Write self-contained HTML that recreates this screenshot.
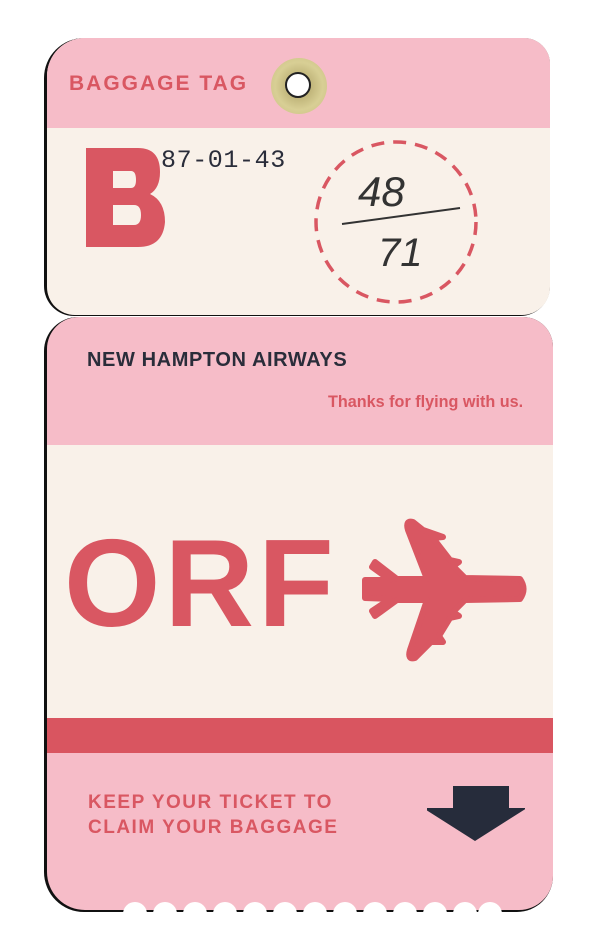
<!DOCTYPE html>
<html><head><meta charset="utf-8"><style>
body{margin:0;width:602px;height:946px;background:#fff;position:relative;overflow:hidden;font-family:"Liberation Sans",sans-serif}
.a{position:absolute}
.t{font-weight:bold;letter-spacing:2px;color:#d95762}
</style></head><body>
<!-- top tag -->
<div class="a" style="left:44px;top:38px;width:506px;height:278px;background:#111;border-radius:40px 26px 30px 30px"></div>
<div class="a" style="left:47px;top:38px;width:503px;height:277px;background:#f9f1e9;border-radius:38px 26px 28px 28px;overflow:hidden">
 <div class="a" style="left:0;top:0;width:100%;height:90px;background:#f6bcc8"></div>
</div>
<div class="a t" style="left:69px;top:72px;font-size:21px">BAGGAGE TAG</div>
<div class="a" style="left:271px;top:58px;width:56px;height:56px;border-radius:50%;background:radial-gradient(circle at 50% 50%,#a99c60 0,#d8cf95 60%,#c9bd80 100%)"></div>
<div class="a" style="left:285px;top:72px;width:26px;height:26px;border-radius:50%;background:#fff;border:2px solid #222;box-sizing:border-box"></div>
<svg class="a" style="left:0;top:0" width="200" height="260"><path fill="#d95762" fill-rule="evenodd" d="M86 148H138Q160 148 160 172Q160 188 150 194Q165 201 165 222Q163 247 138 247H86Z M113 171H131Q136 171 136 180Q136 188 131 188H113Z M113 205H134Q141 205 141 215Q141 225 134 225H113Z"/></svg>
<div class="a" style="left:161px;top:146px;font-family:'Liberation Mono',monospace;font-size:25px;letter-spacing:0.6px;color:#2a2d3a">87-01-43</div>
<svg class="a" style="left:310px;top:138px" width="172" height="168">
 <circle cx="86" cy="84" r="80" fill="none" stroke="#d95762" stroke-width="3.5" stroke-dasharray="13 9"/>
 <line x1="32" y1="86" x2="150" y2="70" stroke="#333" stroke-width="2"/>
 <text x="48" y="68" font-family="Liberation Sans" font-size="42" font-style="italic" fill="#333">48</text>
 <text x="68" y="128" font-family="Liberation Sans" font-size="40" font-style="italic" fill="#333">71</text>
</svg>
<!-- bottom tag -->
<div class="a" style="left:44px;top:317px;width:509px;height:595px;background:#111;border-radius:34px 30px 36px 40px"></div>
<div class="a" style="left:47px;top:317px;width:506px;height:593px;background:#f6bcc8;border-radius:32px 30px 34px 38px;overflow:hidden">
 <div class="a" style="left:0;top:128px;width:100%;height:273px;background:#f9f1e9"></div>
 <div class="a" style="left:0;top:401px;width:100%;height:35px;background:#d95560"></div>
</div>
<svg class="a" style="left:110px;top:890px" width="400" height="30">
 <g fill="#fff">
 <circle cx="25" cy="24" r="12"/><circle cx="55" cy="24" r="12"/><circle cx="85" cy="24" r="12"/><circle cx="115" cy="24" r="12"/><circle cx="145" cy="24" r="12"/><circle cx="175" cy="24" r="12"/><circle cx="205" cy="24" r="12"/><circle cx="235" cy="24" r="12"/><circle cx="265" cy="24" r="12"/><circle cx="295" cy="24" r="12"/><circle cx="325" cy="24" r="12"/><circle cx="355" cy="24" r="12"/><circle cx="380" cy="24" r="12"/>
 <rect x="10" y="24" width="385" height="10"/></g>
</svg>
<div class="a" style="left:87px;top:349px;font-size:20px;letter-spacing:0.6px;color:#2a2d3a;font-weight:bold">NEW HAMPTON AIRWAYS</div>
<div class="a" style="left:328px;top:393px;font-size:16.2px;color:#d95762;font-weight:bold">Thanks for flying with us.</div>
<div class="a" style="left:64px;top:522px;font-size:124px;font-weight:bold;color:#d95762;letter-spacing:4px;line-height:1">ORF</div>
<svg class="a" style="left:355px;top:510px" width="180" height="160">
 <path fill="#d95762" stroke="#d95762" stroke-width="6" stroke-linejoin="round" d="M10 70 L35 70 L17 57 L20 52 L42 69 L72 69 L53 20 Q50 10 58 12 L68 20 L88 27 L78 28 L95 50 L104 52 L98 56 L110 68 L165 69 Q172 79 165 89 L110 90 L98 102 L104 106 L95 108 L84 126 L88 132 L76 132 L60 148 Q52 150 55 140 L72 90 L42 90 L20 106 L17 101 L35 89 L10 88 Z"/>
</svg>
<div class="a t" style="left:88px;top:790px;font-size:19px;line-height:25px;letter-spacing:1.5px">KEEP YOUR TICKET TO<br>CLAIM YOUR BAGGAGE</div>
<svg class="a" style="left:427px;top:785px" width="98" height="60"><path fill="#262c3b" d="M26 1H82V23H100L48 56L-4 23H26Z"/></svg>
</body></html>
